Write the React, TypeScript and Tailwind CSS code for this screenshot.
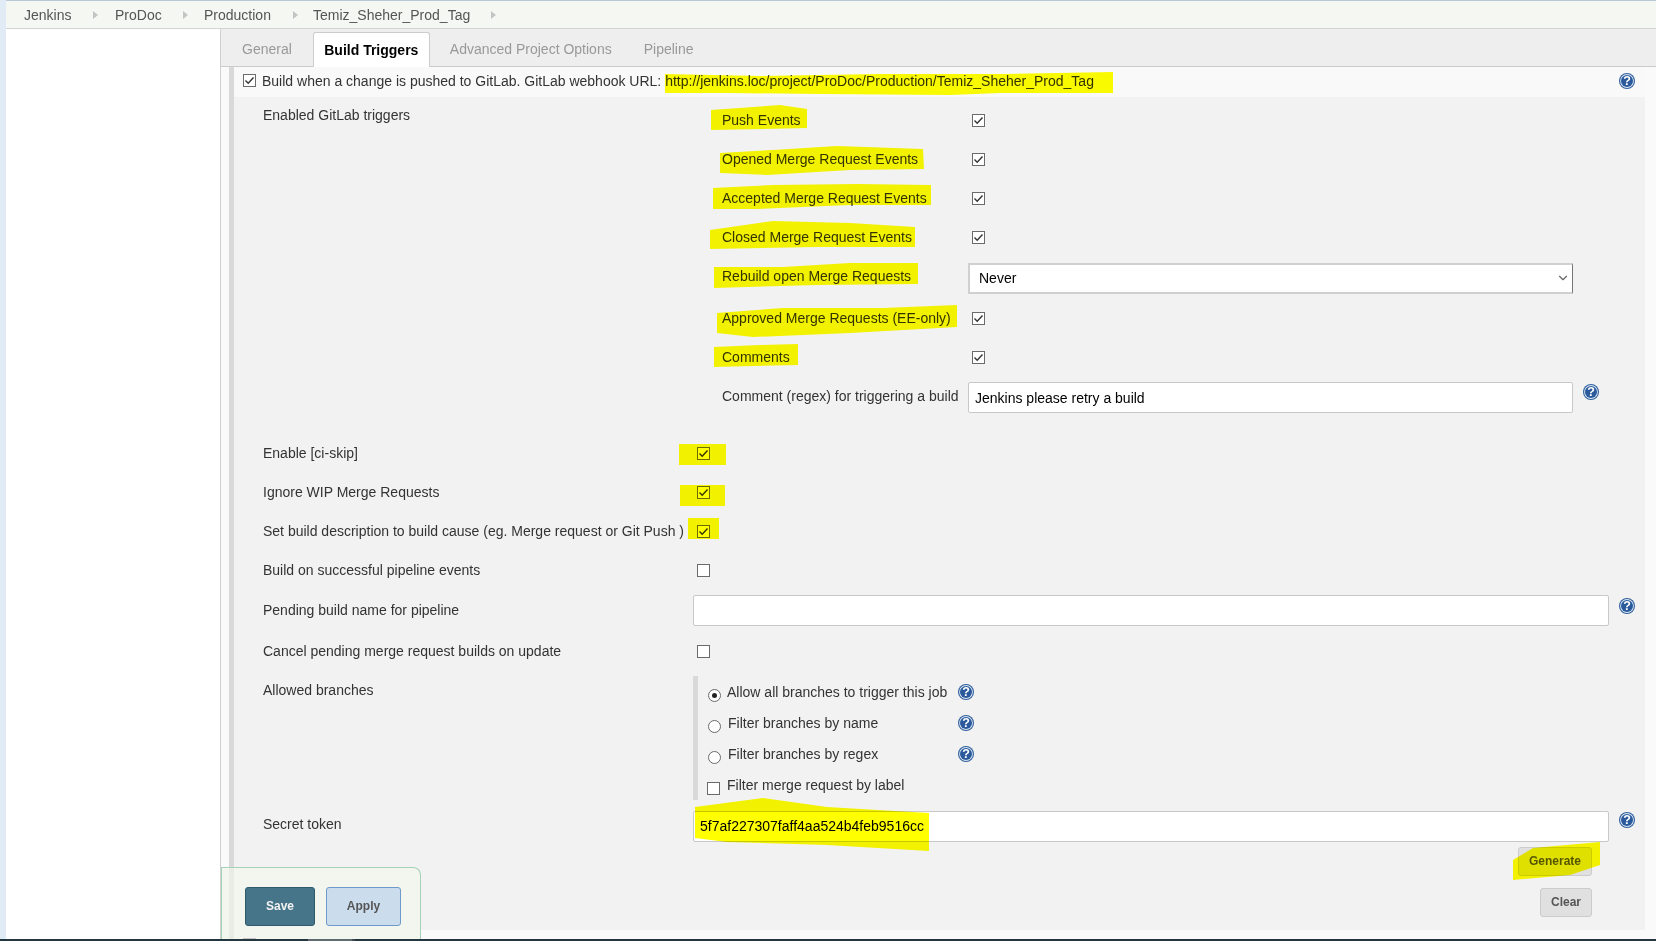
import { ChevronDown } from 'lucide-react';
import type { ReactNode } from 'react';

const crumbs = [
  { name: 'Jenkins', width: 'w-[91px]', gap: 'mr-[17px]' },
  { name: 'ProDoc', width: 'w-[89px]', gap: 'mr-[16px]' },
  { name: 'Production', width: 'w-[109px]', gap: 'mr-[15px]' },
  { name: 'Temiz_Sheher_Prod_Tag', width: 'w-[180px]', gap: '-mr-[3px]' },
];

const marks = [
  '665,74 760,76 880,74 1000,74 1113,72 1113,93 1000,93 950,95 820,94 730,93 665,93',
  '711,110 780,105 807,109 807,128 711,130',
  '720,153 773,150 837,146 923,149 924,169 850,170 767,175 720,173',
  '713,188 773,185 857,184 931,185 931,205 850,205 757,209 713,209',
  '710,230 773,221 850,223 915,227 915,247 817,247 710,249',
  '714,267 783,267 850,263 918,263 918,284 817,285 714,288',
  '717,313 783,308 883,308 957,305 957,327 850,333 753,337 717,333',
  '714,347 760,345 798,344 798,365 714,367',
  '679,444 726,444 726,465 679,465',
  '680,485 725,485 725,506 680,506',
  '688,518 719,518 719,539 688,539',
  '695,807 763,798 827,807 929,813 929,851 827,845 727,842 695,838',
  '1513,860 1533,848 1600,842 1600,865 1570,875 1513,880',
];

function Check({ checked = false }: { checked?: boolean }) {
  return (
    <span className="flex h-[13px] w-[13px] shrink-0 items-center justify-center border border-[#6b6b6b] bg-white">
      {checked && (
        <svg width="11" height="11" viewBox="0 0 11 11" fill="none">
          <path d="M1.5 5.5 L4.2 8.2 L9.5 2.6" stroke="#333" strokeWidth="1.4" />
        </svg>
      )}
    </span>
  );
}

function Radio({ checked = false }: { checked?: boolean }) {
  return (
    <span className="mt-[5px] flex h-[13px] w-[13px] shrink-0 items-center justify-center rounded-full border border-[#6b6b6b] bg-white">
      {checked && <span className="h-[5px] w-[5px] rounded-full bg-[#222]" />}
    </span>
  );
}

function Help() {
  return (
    <svg width="16" height="16" viewBox="0 0 16 16" className="block shrink-0">
      <circle cx="8" cy="8" r="8" fill="#2f5f9f" />
      <circle cx="8" cy="8" r="6.9" fill="#dfe8f3" />
      <circle cx="8" cy="8" r="6" fill="#2a5a9c" />
      <text x="8" y="12.4" textAnchor="middle" fontSize="12.5" fontWeight="700" fill="#fff" fontFamily="Liberation Sans">
        ?
      </text>
    </svg>
  );
}

function TextBox({ value, className }: { value?: string; className: string }) {
  return (
    <div className={`flex h-[31px] items-center rounded-[2px] border border-[#c8c8c8] bg-white pl-[6px] text-[14px] text-black ${className}`}>
      {value}
    </div>
  );
}

function Nested({ label, height = 'h-[39px]', children }: { label: string; height?: string; children: ReactNode }) {
  return (
    <div className={`flex items-center ${height}`}>
      <div className="w-[250px] shrink-0">{label}</div>
      <Check checked />
      {children}
    </div>
  );
}

function Outer({ label, children }: { label: string; children: ReactNode }) {
  return (
    <div className="flex h-[39px] items-center">
      <div className="w-[434px] shrink-0">{label}</div>
      {children}
    </div>
  );
}

function Branch({ control, label, help = true, shift = 'ml-[7px]' }: { control: ReactNode; label: string; help?: boolean; shift?: string }) {
  return (
    <div className="flex h-[31px] items-center">
      <div className="flex w-[250px] shrink-0 items-start pt-[3px]">
        {control}
        <span className={shift}>{label}</span>
      </div>
      {help && <Help />}
    </div>
  );
}

function Triggers() {
  return (
    <div className="flex h-[337px] pt-[4px]">
      <div className="w-[459px] shrink-0 pt-[6px]">Enabled GitLab triggers</div>
      <div className="flex-1">
        <Nested label="Push Events">{null}</Nested>
        <Nested label="Opened Merge Request Events">{null}</Nested>
        <Nested label="Accepted Merge Request Events">{null}</Nested>
        <Nested label="Closed Merge Request Events">{null}</Nested>
        <div className="flex h-[42px] items-start pt-[6px]">
          <div className="w-[246px] shrink-0 pt-[5px]">Rebuild open Merge Requests</div>
          <div className="relative flex h-[31px] w-[605px] items-center rounded-[1px] border-2 border-r border-[#d0d0d0] border-r-[#777777] bg-white pl-[9px] text-[14px] text-black">
            Never
            <ChevronDown className="absolute right-[2px] top-[6px] h-[14px] w-[14px] text-[#666666]" />
          </div>
        </div>
        <Nested label="Approved Merge Requests (EE-only)">{null}</Nested>
        <Nested label="Comments">{null}</Nested>
        <div className="flex h-[57px] items-start pt-[5px]">
          <div className="w-[246px] shrink-0 pt-[6px]">Comment (regex) for triggering a build</div>
          <TextBox value="Jenkins please retry a build" className="w-[605px] pt-[2px]" />
          <span className="ml-[10px] mt-[2px]">
            <Help />
          </span>
        </div>
      </div>
    </div>
  );
}

export default function App() {
  return (
    <div className="relative flex h-[941px] w-[1656px] overflow-hidden bg-white font-['Liberation_Sans',Arial,sans-serif] text-[14px] leading-[17px] text-[#333333]">
      <div className="w-[6px] shrink-0 bg-[#e1ebf5]" />
      <div className="flex-1">
        <div className="flex h-[29px] items-center border-b border-t border-b-[#d3d3d3] border-t-[#b9c9d8] bg-[#f5f8f2] pl-[18px] pt-[1px] text-[#555555]">
          {crumbs.map((c) => (
            <div key={c.name} className={`flex items-center justify-between ${c.width}`}>
              <span>{c.name}</span>
              <span className={`h-0 w-0 border-y-[4px] border-l-[5px] border-y-transparent border-l-[#c4c4c4] ${c.gap}`} />
            </div>
          ))}
        </div>

        <div className="flex h-[912px]">
          <div className="w-[214px] shrink-0 bg-white" />
          <main className="flex-1 border-l border-[#d0d0d0] bg-[#fafafa]">
            <div className="flex h-[38px] items-end border-b border-[#cccccc] bg-[#eeeeee] pl-[21px] text-[#999999]">
              <div className="pb-[8px]">General</div>
              <div className="relative top-px ml-[21px] flex h-[35px] w-[117px] items-center justify-center rounded-t-[3px] border border-b-0 border-[#cccccc] bg-white font-bold text-black">
                Build Triggers
              </div>
              <div className="ml-[20px] pb-[8px]">Advanced Project Options</div>
              <div className="ml-[32px] pb-[8px]">Pipeline</div>
            </div>

            <div className="ml-[8px] mr-[11px] border-l-[5px] border-[#d9d9d9]">
              <div className="flex h-[30px] items-center bg-[#f9f9f9] pl-[9px] pb-[2px]">
                <span className="-mt-[1px]">
                  <Check checked />
                </span>
                <span className="ml-[6px]">Build when a change is pushed to GitLab. GitLab webhook URL: http://jenkins.loc/project/ProDoc/Production/Temiz_Sheher_Prod_Tag</span>
                <span className="ml-auto mr-[10px]">
                  <Help />
                </span>
              </div>

              <div className="h-[833px] bg-[#f2f2f2] pl-[29px]">
                <Triggers />
                <Outer label="Enable [ci-skip]">
                  <Check checked />
                </Outer>
                <Outer label="Ignore WIP Merge Requests">
                  <Check checked />
                </Outer>
                <Outer label="Set build description to build cause (eg. Merge request or Git Push )">
                  <Check checked />
                </Outer>
                <Outer label="Build on successful pipeline events">
                  <Check />
                </Outer>
                <div className="flex h-[42px] items-center pb-[1px]">
                  <div className="w-[430px] shrink-0 pb-[1px]">Pending build name for pipeline</div>
                  <TextBox className="w-[916px]" />
                  <span className="ml-[10px] -mt-[9px]">
                    <Help />
                  </span>
                </div>
                <Outer label="Cancel pending merge request builds on update">
                  <Check />
                </Outer>

                <div className="flex pt-[5px]">
                  <div className="w-[430px] shrink-0 pt-[6px]">Allowed branches</div>
                  <div className="border-l-[5px] border-[#d9d9d9] pl-[10px]">
                    <Branch control={<Radio checked />} label="Allow all branches to trigger this job" shift="ml-[6px]" />
                    <Branch control={<Radio />} label="Filter branches by name" />
                    <Branch control={<Radio />} label="Filter branches by regex" />
                    <Branch
                      control={
                        <span className="mt-[5px] -ml-px">
                          <Check />
                        </span>
                      }
                      label="Filter merge request by label"
                      help={false}
                    />
                  </div>
                </div>

                <div className="mt-[11px] flex items-start">
                  <div className="w-[430px] shrink-0 pt-[5px]">Secret token</div>
                  <TextBox value="5f7af227307faff4aa524b4feb9516cc" className="w-[916px]" />
                  <span className="ml-[10px] mt-[1px]">
                    <Help />
                  </span>
                </div>
                <div className="mr-[53px] flex flex-col items-end gap-[12px] pt-[5px] text-[12px] font-bold text-[#555555]">
                  <button className="h-[29px] w-[74px] rounded-[3px] border border-[#cccccc] bg-[#e0e0e0]">Generate</button>
                  <button className="h-[29px] w-[52px] rounded-[3px] border border-[#cccccc] bg-[#e0e0e0]">Clear</button>
                </div>
              </div>
            </div>
          </main>
        </div>
      </div>

      {/* sticky save bar */}
      <div className="absolute bottom-0 left-[221px] flex h-[74px] w-[200px] items-start gap-[11px] rounded-tr-[8px] border border-b-0 border-[#a7d1b8] bg-[#f3f6ef] pl-[23px] pt-[19px] text-[12px] font-bold">
        <span className="absolute bottom-0 left-[7px] top-0 w-[5px] bg-[#e9ece5]" />
        <button className="h-[39px] w-[70px] rounded-[3px] border border-[#2f5a6c] bg-[#467589] text-[#f2f2f2]">Save</button>
        <button className="h-[39px] w-[75px] rounded-[3px] border border-[#6d9acb] bg-[#cbdcec] text-[#555555]">Apply</button>
        <span className="absolute left-[21px] top-[70px] h-[13px] w-[13px] border border-[#c4c4c4] bg-white" />
      </div>
      <div className="absolute bottom-0 left-0 flex h-[2px] w-full bg-[#243640]">
        <span className="ml-[308px] w-[44px] bg-[#5f6b70]" />
        <span className="w-[3px] bg-[#3f4a50]" />
      </div>

      {/* yellow marker scribbles on top of the page */}
      <svg className="pointer-events-none absolute left-0 top-0 mix-blend-multiply" width="1656" height="941">
        {marks.map((points) => (
          <polygon key={points} points={points} fill="#ffff00" />
        ))}
      </svg>
    </div>
  );
}
